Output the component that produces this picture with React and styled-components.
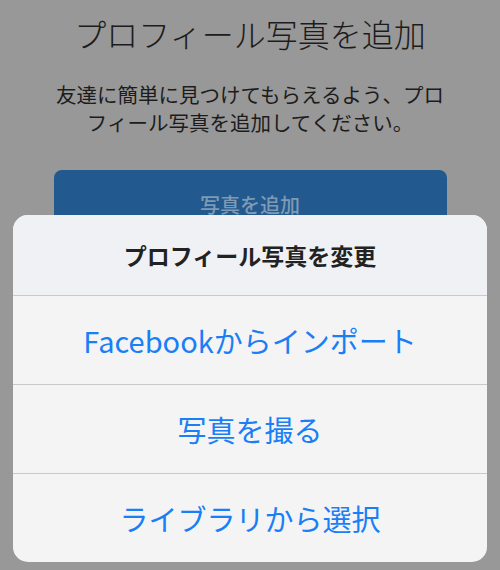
import React from 'react';
import styled, { createGlobalStyle } from 'styled-components';

const GlobalStyle = createGlobalStyle`
  body {
    margin: 0;
    font-family: 'Noto Sans CJK JP', 'Noto Sans', sans-serif;
  }
`

// fondo atenuado
const Page = styled.div`
  position: relative;
  width: 500px;
  height: 570px;
  overflow: hidden;
  background-color: #989898;
  display: flex;
  flex-direction: column;
  align-items: center;
  padding-top: 14px;
  box-sizing: border-box;
`

const Title = styled.h1`
  margin: 0;
  font-size: 32px;
  line-height: 38px;
  font-weight: 300;
  color: #1c1c1c;
  text-align: center;
`

const Subtitle = styled.p`
  margin: 28px 0 0;
  width: 400px;
  font-size: 20.5px;
  line-height: 28px;
  color: #1c1c1c;
  text-align: center;
`

const AddButton = styled.div`
  margin-top: 34px;
  width: 393px;
  height: 68px;
  border-radius: 8px;
  background-color: #22598f;
  color: #7f9ab4;
  font-size: 20px;
  font-weight: 500;
  display: flex;
  align-items: center;
  justify-content: center;
`

// hoja de acciones
const Sheet = styled.div`
  position: absolute;
  left: 13px;
  right: 13px;
  bottom: 8px;
  border-radius: 15px;
  overflow: hidden;
  background-color: #f4f4f4;
  display: flex;
  flex-direction: column;
`

const SheetHeader = styled.div`
  height: 80px;
  display: flex;
  align-items: center;
  justify-content: center;
  background-color: #eff1f4;
  font-size: 23px;
  font-weight: 700;
  color: #222222;
`

const SheetRow = styled.div`
  height: 89px;
  box-sizing: border-box;
  border-top: 1px solid #c9c9c9;
  display: flex;
  align-items: center;
  justify-content: center;
  font-size: 29px;
  color: #1a7ef6;
`

const actions = ['Facebookからインポート', '写真を撮る', 'ライブラリから選択']

function App() {
  return (
    <>
      <GlobalStyle />
      <Page>
        <Title>プロフィール写真を追加</Title>
        <Subtitle>友達に簡単に見つけてもらえるよう、プロフィール写真を追加してください。</Subtitle>
        <AddButton>写真を追加</AddButton>
        <Sheet>
          <SheetHeader>プロフィール写真を変更</SheetHeader>
          {actions.map((label) => (
            <SheetRow key={label}>{label}</SheetRow>
          ))}
        </Sheet>
      </Page>
    </>
  );
}

export default App;
